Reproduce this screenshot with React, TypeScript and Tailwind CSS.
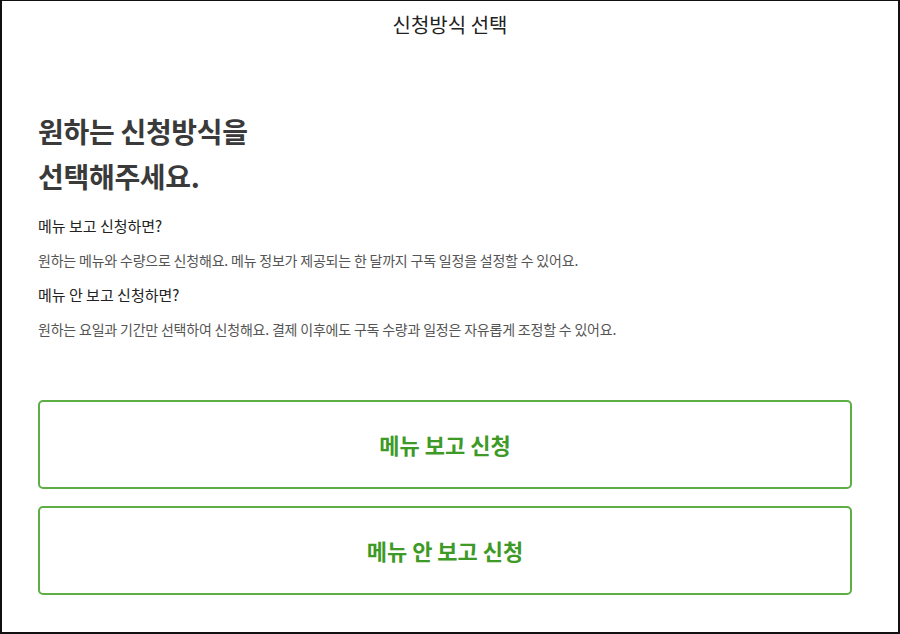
export default function App() {
  return (
    <div
      className="w-[900px] h-[634px] bg-white border-x-2 border-t border-b-2 border-[#111] overflow-hidden flex flex-col"
      style={{ fontFamily: '"Noto Sans CJK KR", "Noto Sans", sans-serif' }}
    >
      <header className="h-[50px] shrink-0 flex items-center justify-center">
        <h1 className="text-[20px] text-[#222] -mt-[3px]">신청방식 선택</h1>
      </header>
      <main className="pl-[36px] pr-[46px] pt-[58px]">
        <h2 className="text-[28px] font-semibold leading-[45px] text-[#3a3a3a] tracking-[-0.3px]">
          원하는 신청방식을
          <br />
          선택해주세요.
        </h2>
        <div className="mt-[16px]">
          <p className="text-[15px] text-[#222] leading-[22px]">메뉴 보고 신청하면?</p>
          <p className="mt-[12px] text-[14px] text-[#555] leading-[22px] tracking-[-0.2px]">
            원하는 메뉴와 수량으로 신청해요. 메뉴 정보가 제공되는 한 달까지 구독 일정을 설정할 수 있어요.
          </p>
          <p className="mt-[13px] text-[15px] text-[#222] leading-[22px]">메뉴 안 보고 신청하면?</p>
          <p className="mt-[12px] text-[14px] text-[#555] leading-[22px] tracking-[-0.2px]">
            원하는 요일과 기간만 선택하여 신청해요. 결제 이후에도 구독 수량과 일정은 자유롭게 조정할 수 있어요.
          </p>
        </div>
        <div className="mt-[60px] flex flex-col gap-[17px]">
          <button className="h-[89px] w-full rounded-[5px] border-2 border-[#5cae45] text-[22px] font-semibold text-[#3d9a26]">
            메뉴 보고 신청
          </button>
          <button className="h-[89px] w-full rounded-[5px] border-2 border-[#5cae45] text-[22px] font-semibold text-[#3d9a26]">
            메뉴 안 보고 신청
          </button>
        </div>
      </main>
    </div>
  );
}
